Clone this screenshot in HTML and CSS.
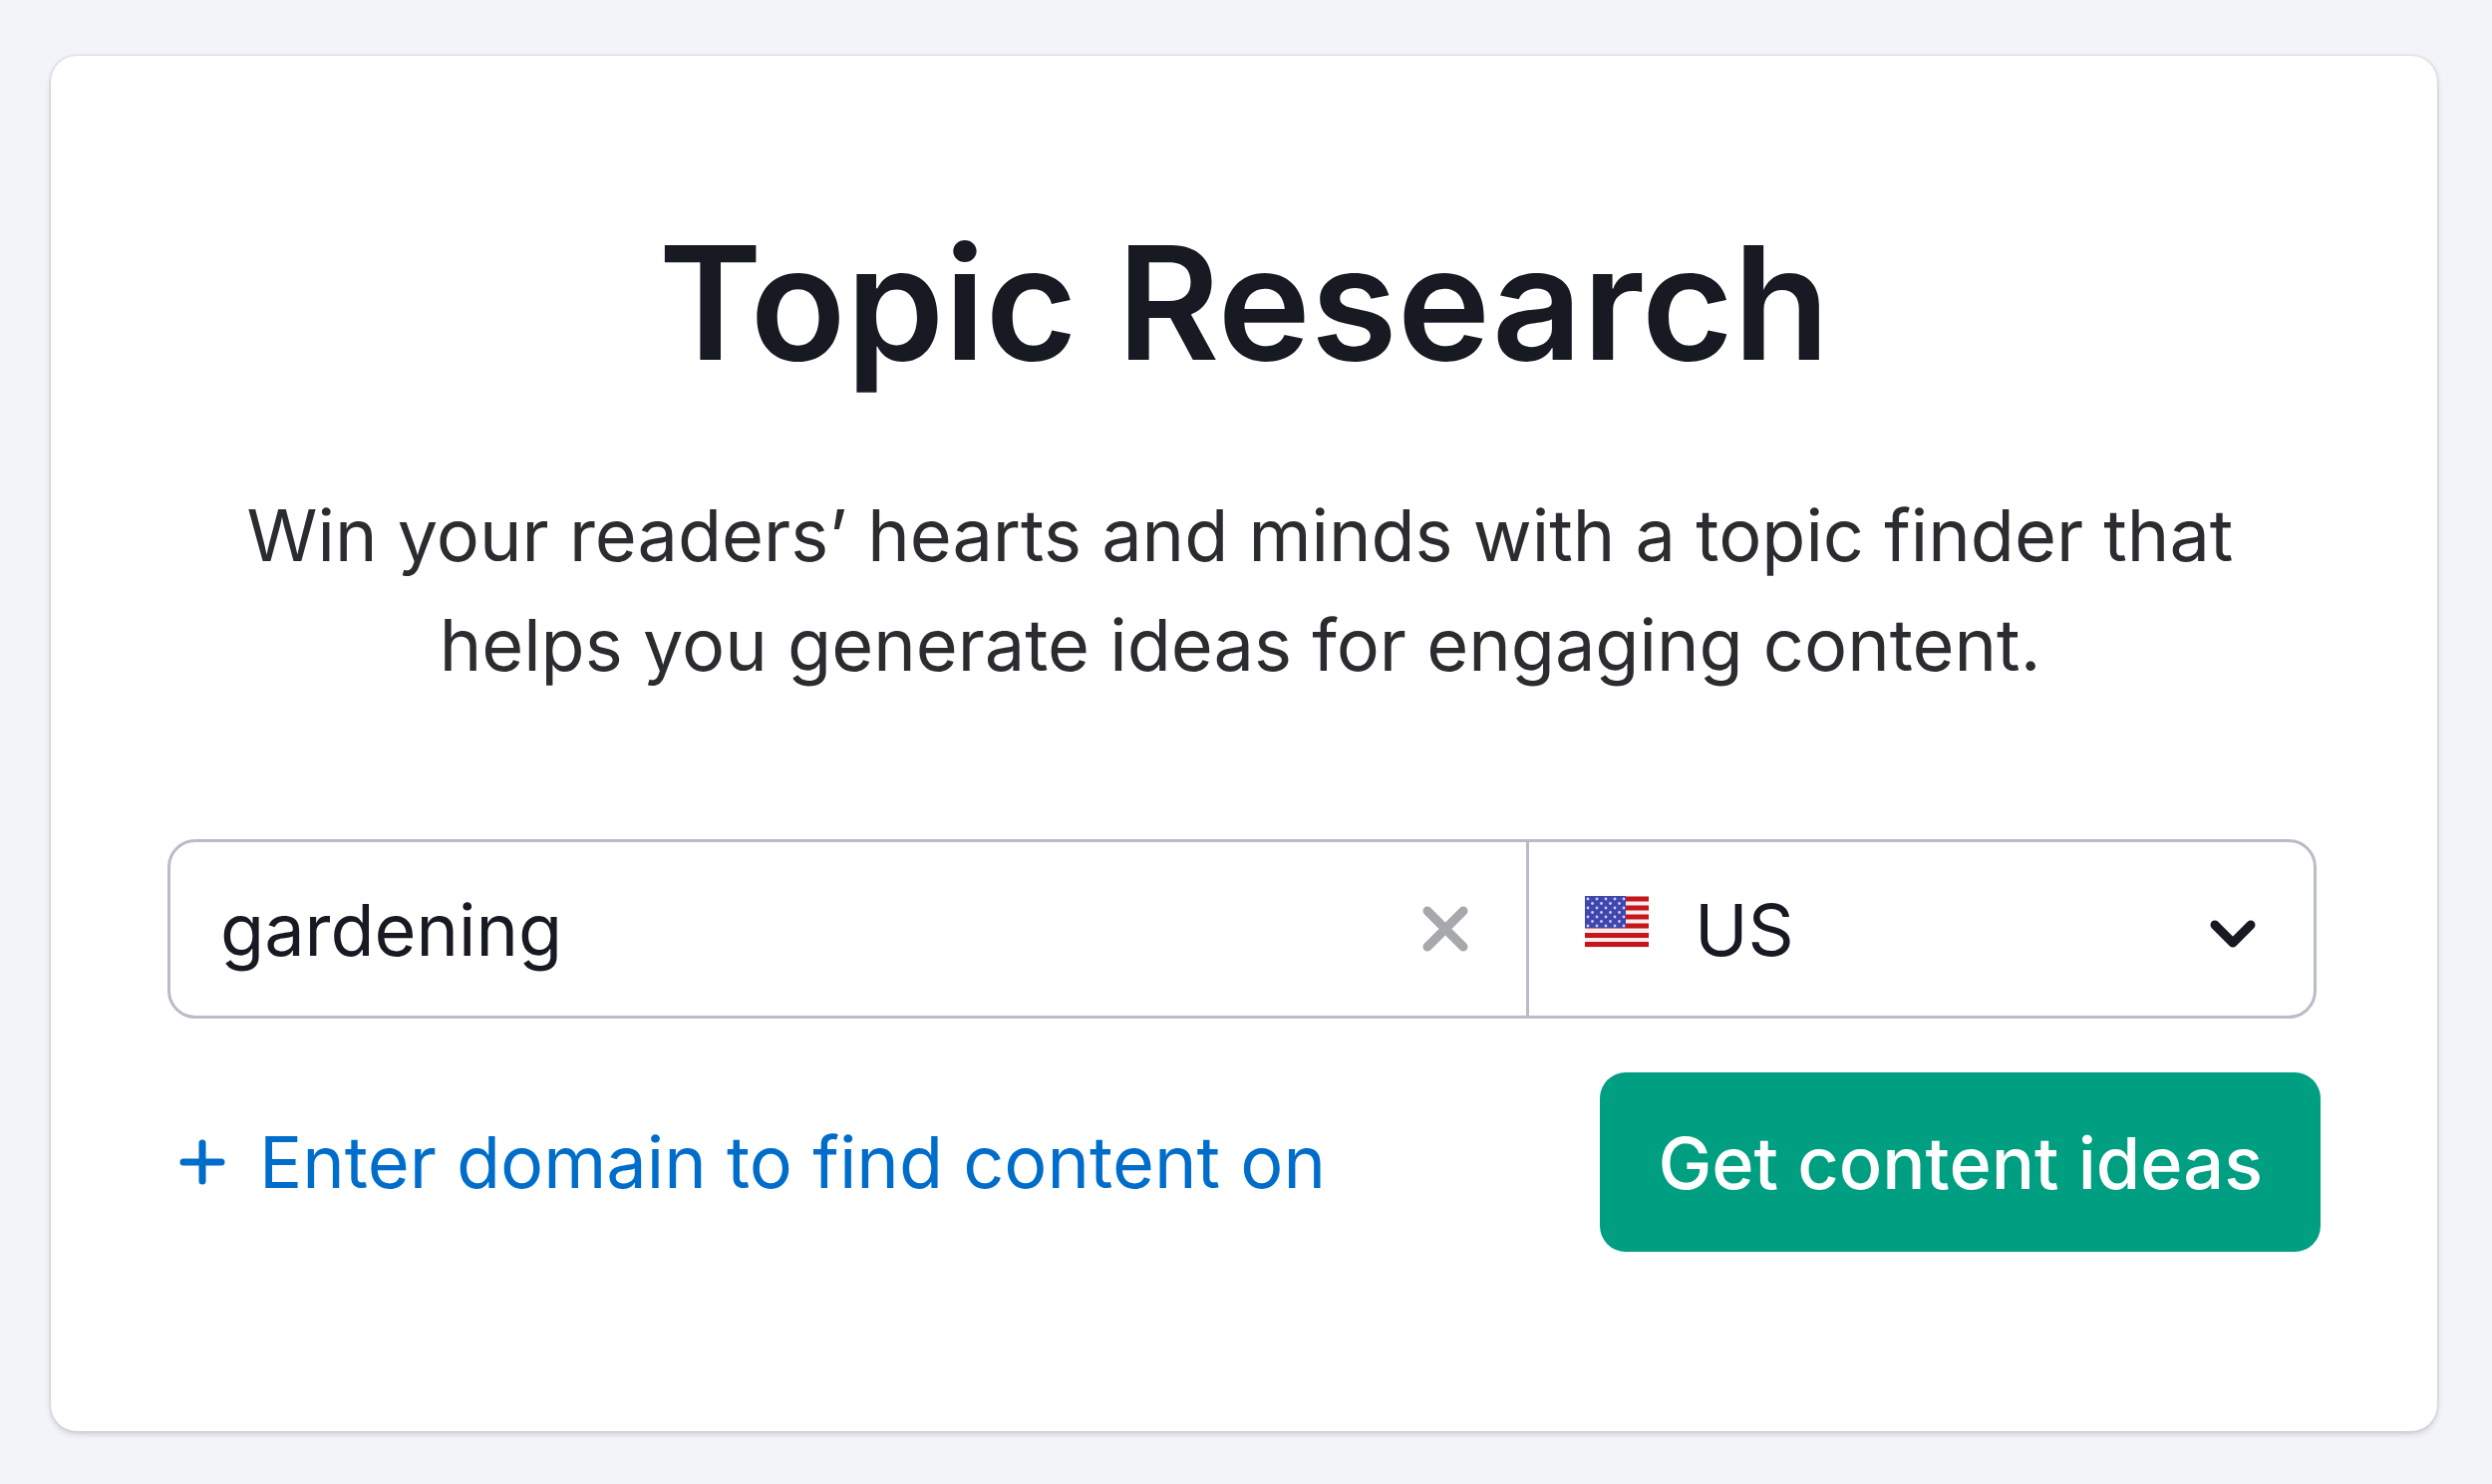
FILE: index.html
```html
<!DOCTYPE html>
<html lang="en">
<head>
<meta charset="utf-8">
<meta name="viewport" content="width=device-width, initial-scale=1">
<title>Topic Research</title>
<link rel="stylesheet" href="styles.css">
</head>
<body>
<main class="card">
  <h1 class="title">Topic Research</h1>
  <p class="lead">Win your readers’ hearts and minds with a topic finder that<br>helps you generate ideas for engaging content.</p>
  <form class="search">
    <div class="fields">
      <div class="topic">
        <input class="topic-input" type="text" value="gardening" aria-label="Topic">
        <button class="clear" type="button" aria-label="Clear">
          <svg viewBox="0 0 46 46" width="46" height="46"><path d="M5 5 41 41M41 5 5 41" stroke="#a6a8ad" stroke-width="9" stroke-linecap="round"/></svg>
        </button>
      </div>
      <div class="country">
        <svg class="flag" viewBox="0 0 64 52" width="64" height="52" aria-hidden="true">
          <defs><pattern id="stars" width="9" height="9" patternUnits="userSpaceOnUse"><circle cx="3" cy="3" r="1.4" fill="#c9cdee"/><circle cx="7.500" cy="7.500" r="1.400" fill="#c9cdee"/></pattern></defs>
          <rect width="64" height="52" fill="#f6eeee"/>
          <path d="M0 3H64M0 12H64M0 21H64M0 30H64M0 39.500H64M0 48.500H64" stroke="#c4161b" stroke-width="5"/>
          <rect width="41" height="32" fill="#3f46ad"/><rect width="41" height="32" fill="url(#stars)"/>
        </svg>
        <select class="country-select" aria-label="Country"><option>US</option></select>
        <svg class="chevron" viewBox="0 0 46 28" width="46" height="28" aria-hidden="true"><path d="M5 5 23 23 41 5" fill="none" stroke="#171a22" stroke-width="9" stroke-linecap="round" stroke-linejoin="round"/></svg>
      </div>
    </div>
    <div class="actions">
      <a class="domain" href="#"><svg viewBox="0 0 46 46" width="46" height="46" aria-hidden="true"><path d="M23 4V42M4 23H42" stroke="#006dca" stroke-width="7" stroke-linecap="round"/></svg>Enter domain to find content on</a>
      <button class="submit" type="submit">Get content ideas</button>
    </div>
  </form>
</main>
</body>
</html>
```

FILE: styles.css
```css
* { box-sizing: border-box; }
body { margin: 0; padding: 56px 55px 54px 51px; background: #f3f4f9; font-family: Inter, "Liberation Sans", sans-serif; color: #171a22; }
.card { padding: 148px 117px 180px; background: #fff; border-radius: 26px; box-shadow: 0 0 3px rgba(25, 27, 35, .2), 0 3px 6px rgba(25, 27, 35, .16); }
.title { margin: 0; font-size: 158px; line-height: 200px; font-weight: 600; text-align: center; }
.lead { margin: 78px 0 140px; padding-right: 8px; font-size: 72px; line-height: 110px; text-align: center; color: #2b2c2f; }
.fields { display: flex; height: 180px; margin-right: 4px; border: 3px solid #b9bbc6; border-radius: 28px; }
.topic { flex: 1; min-width: 0; display: flex; align-items: center; padding: 0 58px 0 50px; }
.topic-input { flex: 1; min-width: 0; padding: 0; border: 0; outline: 0; background: none; font: inherit; font-size: 72px; color: inherit; }
.clear { display: flex; padding: 0; border: 0; background: none; }
.country { position: relative; width: 790px; border-left: 3px solid #b9bbc6; }
.country-select { width: 100%; height: 100%; padding: 0 100px 0 166px; border: 0; outline: 0; appearance: none; background: none; font: inherit; font-size: 72px; color: inherit; }
.flag { position: absolute; left: 56px; top: 54px; pointer-events: none; }
.chevron { position: absolute; right: 58px; top: 78px; pointer-events: none; }
.actions { display: flex; justify-content: space-between; align-items: center; margin-top: 54px; }
.domain { display: flex; align-items: center; gap: 34px; padding-left: 12px; font-size: 72px; line-height: 88px; color: #006dca; text-decoration: none; }
.submit { height: 180px; padding: 0 58px; border: 0; border-radius: 26px; background: #009f81; color: #fff; font: inherit; font-size: 72px; font-weight: 500; }
```
